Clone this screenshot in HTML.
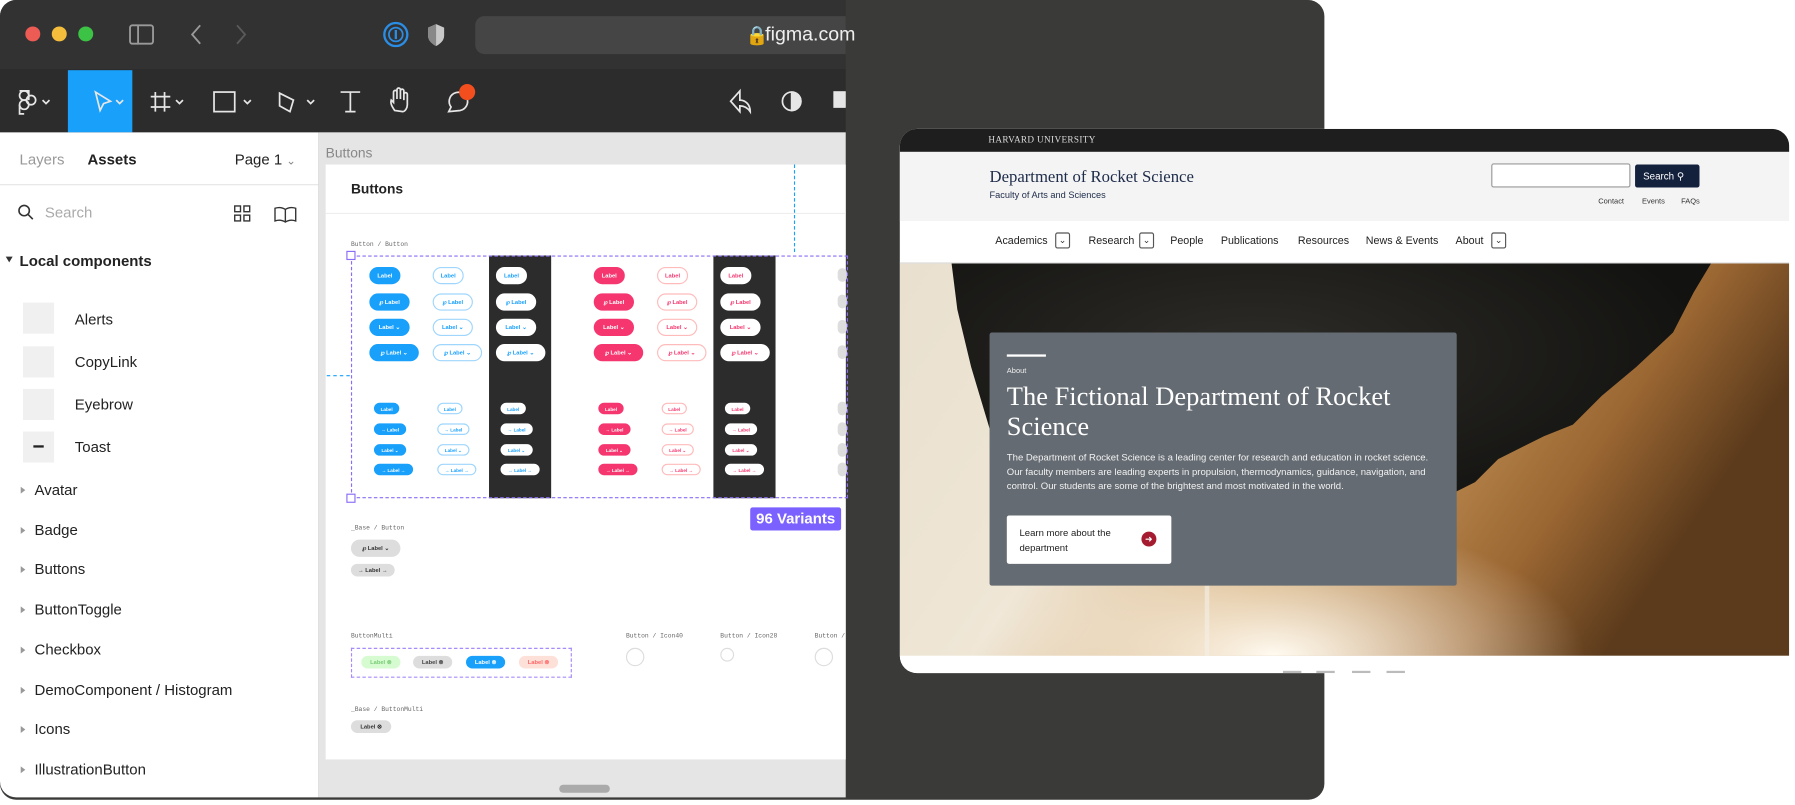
<!DOCTYPE html>
<html><head><meta charset="utf-8">
<style>
*{margin:0;padding:0;box-sizing:border-box}
body{width:1795px;height:805px;overflow:hidden;background:#fff;font-family:"Liberation Sans",sans-serif}
#s{position:absolute;left:0;top:0;width:1560px;height:700px;transform:scale(1.15064);transform-origin:0 0}
.a{position:absolute}
.lbl{position:absolute;font-family:"Liberation Mono",monospace;font-size:5.5px;color:#666}
.b{position:absolute;border-radius:9px;font-size:5px;font-weight:bold;display:flex;align-items:center;justify-content:center}
.li{position:absolute;left:30px;font-size:13px;color:#222}
.tri{position:absolute;left:18px;width:0;height:0;border-left:4px solid #999;border-top:3px solid transparent;border-bottom:3px solid transparent}
.nav span{position:absolute;top:204px;font-size:9.3px;color:#222}
.dd{position:absolute;top:202px;width:13px;height:14px;border:1px solid #555;border-radius:2px;font-size:8px;text-align:center;line-height:11px;color:#333}
</style></head><body><div id="s">
<div class="a" style="left:0;top:0;width:1151px;height:695px;background:#3a3a39;border-radius:14px"></div>
<div class="a" style="left:0;top:0;width:735px;height:60px;background:#323232;border-radius:14px 0 0 0"></div>
<div class="a" style="left:0;top:60px;width:735px;height:55px;background:#2c2c2c"></div>
<div class="a" style="left:22px;top:23px;width:13px;height:13px;border-radius:50%;background:#ed5b55"></div>
<div class="a" style="left:45px;top:23px;width:13px;height:13px;border-radius:50%;background:#f4bd3b"></div>
<div class="a" style="left:68px;top:23px;width:13px;height:13px;border-radius:50%;background:#3cc244"></div>
<svg class="a" style="left:110px;top:18px" width="120" height="24" viewBox="0 0 120 24" fill="none" stroke="#9a9a9a" stroke-width="1.6"><rect x="3" y="4" width="20" height="16" rx="2"/><line x1="10" y1="4" x2="10" y2="20"/><path d="M64 4l-7 8 7 8"/><path d="M96 4l7 8-7 8" stroke="#5a5a5a"/></svg>
<svg class="a" style="left:330px;top:17px" width="70" height="26"><circle cx="14" cy="13" r="10" fill="none" stroke="#2b8ee6" stroke-width="2"/><circle cx="14" cy="13" r="6" fill="none" stroke="#2b8ee6" stroke-width="1.5"/><rect x="13" y="9" width="2" height="8" fill="#2b8ee6"/><path d="M49 4l7 3v7c0 4-3 7-7 9-4-2-7-5-7-9V7z" fill="#c8c8c8"/><path d="M49 4v19c-4-2-7-5-7-9V7z" fill="#888"/></svg>
<div class="a" style="left:413px;top:14px;width:322px;height:33px;background:#454545;border-radius:8px 0 0 8px"></div>
<div class="a" style="left:648px;top:21px;font-size:16px;color:#eee">&#128274;</div>
<div class="a" style="left:665px;top:20px;font-size:17px;color:#eee">figma.com</div>
<div class="a" style="left:59px;top:61px;width:56px;height:54px;background:#18a0fb"></div>
<svg class="a" style="left:0;top:60px" width="735" height="56" fill="none" stroke="#e6e6e6" stroke-width="1.5">
<g><circle cx="21" cy="23" r="4"/><circle cx="21" cy="31" r="4"/><circle cx="27" cy="27" r="4"/><path d="M17 19h8v8"/><path d="M17 31v8h4"/></g>
<path d="M37 27l3 3 3-3"/>
<path d="M83 20l13 8-6 2-3 6z"/><path d="M101 27l3 3 3-3"/>
<path d="M135 20v17M143 20v17M131 24h17M131 33h17"/><path d="M153 27l3 3 3-3"/>
<rect x="186" y="20" width="18" height="17"/><path d="M212 27l3 3 3-3"/>
<path d="M243 21l12 6-3 10-9-5z"/><path d="M267 27l3 3 3-3"/>
<path d="M296 20h17M304.5 20v17M300 37h9"/>
<path d="M343 36c-2-3-4-6-3-9l2 2v-9a1.5 1.5 0 013 0v6-8a1.5 1.5 0 013 0v8-7a1.5 1.5 0 013 0v8-5a1.5 1.5 0 013 0v9c0 3-2 6-4 6z"/>
<path d="M390 37l2-4a8 8 0 118 3z"/>
<path d="M643 19l-8 9 8 9v-5c4 0 7 2 9 5 0-6-4-10-9-10z"/>
<circle cx="688" cy="28" r="8"/><path d="M688 20a8 8 0 010 16z" fill="#e6e6e6"/>
<rect x="725" y="20" width="10" height="13" fill="#e6e6e6"/>
</svg>
<div class="a" style="left:399px;top:73px;width:14px;height:14px;border-radius:50%;background:#f24e1e"></div>
<div class="a" style="left:0;top:115px;width:277px;height:578px;background:#fff;border-radius:0 0 0 14px"></div>
<div class="a" style="left:17px;top:131px;font-size:13px;color:#999">Layers</div>
<div class="a" style="left:76px;top:131px;font-size:13px;color:#222;font-weight:bold">Assets</div>
<div class="a" style="left:204px;top:131px;font-size:13px;color:#222">Page 1 <span style="color:#888;font-size:10px">&#8964;</span></div>
<div class="a" style="left:0;top:160px;width:277px;height:1px;background:#e5e5e5"></div>
<svg class="a" style="left:15px;top:177px" width="16" height="16" fill="none" stroke="#333" stroke-width="1.4"><circle cx="6" cy="6" r="4.5"/><path d="M9.5 9.5l4 4"/></svg>
<div class="a" style="left:39px;top:177px;font-size:13px;color:#aaa">Search</div>
<svg class="a" style="left:203px;top:177px" width="60" height="18" fill="none" stroke="#333" stroke-width="1.2"><rect x="1" y="2" width="5" height="5"/><rect x="9" y="2" width="5" height="5"/><rect x="1" y="10" width="5" height="5"/><rect x="9" y="10" width="5" height="5"/><path d="M36 4c3-1 6-1 9 1 3-2 6-2 9-1v11c-3-1-6-1-9 1-3-2-6-2-9-1zM45 5v11"/></svg>
<div class="a" style="left:5px;top:223px;width:0;height:0;border-top:5px solid #333;border-left:3px solid transparent;border-right:3px solid transparent"></div>
<div class="a" style="left:17px;top:219px;font-size:13px;color:#222;font-weight:bold">Local components</div>
<div class="a" style="left:20px;top:263px;width:27px;height:27px;background:#f0f0f0"></div>
<div class="a" style="left:20px;top:301px;width:27px;height:27px;background:#f0f0f0"></div>
<div class="a" style="left:20px;top:338px;width:27px;height:27px;background:#f0f0f0"></div>
<div class="a" style="left:20px;top:375px;width:27px;height:27px;background:#f0f0f0"></div>
<div class="a" style="left:29px;top:387px;width:9px;height:2px;background:#222"></div>
<div class="li" style="left:65px;top:270px">Alerts</div>
<div class="li" style="left:65px;top:307px">CopyLink</div>
<div class="li" style="left:65px;top:344px">Eyebrow</div>
<div class="li" style="left:65px;top:381px">Toast</div>
<div class="tri" style="top:423px"></div><div class="li" style="top:418px">Avatar</div>
<div class="tri" style="top:458px"></div><div class="li" style="top:453px">Badge</div>
<div class="tri" style="top:492px"></div><div class="li" style="top:487px">Buttons</div>
<div class="tri" style="top:527px"></div><div class="li" style="top:522px">ButtonToggle</div>
<div class="tri" style="top:562px"></div><div class="li" style="top:557px">Checkbox</div>
<div class="tri" style="top:597px"></div><div class="li" style="top:592px">DemoComponent / Histogram</div>
<div class="tri" style="top:631px"></div><div class="li" style="top:626px">Icons</div>
<div class="tri" style="top:666px"></div><div class="li" style="top:661px">IllustrationButton</div>
<div class="a" style="left:277px;top:115px;width:458px;height:578px;background:#e5e5e5"></div>
<div class="a" style="left:283px;top:126px;font-size:12px;color:#888">Buttons</div>
<div class="a" style="left:283px;top:143px;width:452px;height:517px;background:#fff"></div>
<div class="a" style="left:283px;top:185px;width:452px;height:1px;background:#eee"></div>
<div class="a" style="left:305px;top:157px;font-size:12px;font-weight:bold;color:#222">Buttons</div>
<div class="a" style="left:690px;top:143px;height:76px;border-left:1px dashed #18a0fb"></div>
<div class="a" style="left:284px;top:326px;width:20px;border-top:1px dashed #18a0fb"></div>
<div class="lbl" style="left:305px;top:209px">Button / Button</div>
<div class="a" style="left:425px;top:222px;width:54px;height:211px;background:#2c2c2c"></div>
<div class="a" style="left:620px;top:222px;width:54px;height:211px;background:#2c2c2c"></div>
<div class="a" style="left:305px;top:222px;width:432px;height:211px;border:1px dashed #8b6cf6"></div>
<div class="a" style="left:301px;top:218px;width:8px;height:8px;border:1px solid #8b6cf6;background:#fff"></div>
<div class="a" style="left:301px;top:429px;width:8px;height:8px;border:1px solid #8b6cf6;background:#fff"></div>
<div id="btns"></div>
<div class="a" style="left:652px;top:441px;width:79px;height:20px;background:#7b61ff;border-radius:2px;color:#fff;font-size:13px;font-weight:bold;text-align:center;line-height:20px">96 Variants</div>
<div class="lbl" style="left:305px;top:455px">_Base / Button</div>
<div class="b" style="left:305px;top:469px;width:43px;height:15px;background:#ddd;color:#333">&#8472; Label &#8964;</div>
<div class="b" style="left:305px;top:490px;width:38px;height:11px;background:#ddd;color:#333">&#8594; Label &#8594;</div>
<div class="lbl" style="left:305px;top:549px">ButtonMulti</div>
<div class="lbl" style="left:544px;top:549px">Button / Icon40</div>
<div class="lbl" style="left:626px;top:549px">Button / Icon28</div>
<div class="lbl" style="left:708px;top:549px">Button /</div>
<div class="a" style="left:305px;top:563px;width:192px;height:26px;border:1px dashed #a78bfa"></div>
<div class="b" style="left:314px;top:570px;width:34px;height:11px;background:#d7fbd0;color:#7c7">Label ⊗</div>
<div class="b" style="left:359px;top:570px;width:34px;height:11px;background:#ddd;color:#444">Label ⊗</div>
<div class="b" style="left:405px;top:570px;width:34px;height:11px;background:#18a0fb;color:#fff">Label ⊗</div>
<div class="b" style="left:451px;top:570px;width:34px;height:11px;background:#fde0d8;color:#f66">Label ⊗</div>
<div class="a" style="left:544px;top:563px;width:16px;height:16px;border:1px solid #ddd;border-radius:50%"></div>
<div class="a" style="left:626px;top:563px;width:12px;height:12px;border:1px solid #ddd;border-radius:50%"></div>
<div class="a" style="left:708px;top:563px;width:16px;height:16px;border:1px solid #ddd;border-radius:50%"></div>
<div class="lbl" style="left:305px;top:613px">_Base / ButtonMulti</div>
<div class="b" style="left:305px;top:626px;width:35px;height:11px;background:#ddd;color:#333">Label ⊗</div>
<div class="a" style="left:486px;top:682px;width:44px;height:7px;background:#aaa;border-radius:4px"></div>
<div class="a" style="left:782px;top:112px;width:773px;height:473px;background:#fff;border-radius:15px;overflow:hidden">
 <div class="a" style="left:0;top:0;width:773px;height:20px;background:#1e1e1e"></div>
 <div class="a" style="left:77px;top:5px;font-family:'Liberation Serif',serif;font-size:8px;color:#ddd;letter-spacing:.3px">HARVARD UNIVERSITY</div>
 <div class="a" style="left:0;top:20px;width:773px;height:60px;background:#f3f4f3"></div>
 <div class="a" style="left:78px;top:34px;font-family:'Liberation Serif',serif;font-size:14.5px;color:#1e2b4a">Department of Rocket Science</div>
 <div class="a" style="left:78px;top:53px;font-size:8px;color:#1e2b4a">Faculty of Arts and Sciences</div>
 <div class="a" style="left:514px;top:30px;width:121px;height:21px;background:#fff;border:1px solid #999;border-radius:2px"></div>
 <div class="a" style="left:639px;top:31px;width:56px;height:20px;background:#14213d;border-radius:2px;color:#fff;font-size:8.5px;line-height:20px;padding-left:7px">Search &#9906;</div>
 <div class="a" style="left:607px;top:60px;font-size:6.5px;color:#333">Contact</div>
 <div class="a" style="left:645px;top:60px;font-size:6.5px;color:#333">Events</div>
 <div class="a" style="left:679px;top:60px;font-size:6.5px;color:#333">FAQs</div>
 <div class="a" style="left:0;top:116px;width:773px;height:1px;background:#ddd"></div>
 <svg class="a" style="left:0;top:117px" width="773" height="341" viewBox="0 0 773 341">
  <defs>
   <linearGradient id="g1" x1="0" y1="0" x2="1" y2="0.3"><stop offset="0" stop-color="#e9e0cf"/><stop offset=".35" stop-color="#efe6d6"/><stop offset=".6" stop-color="#c99a5c"/><stop offset=".85" stop-color="#9a6632"/><stop offset="1" stop-color="#5c3b1c"/></linearGradient>
   <radialGradient id="g2" cx=".42" cy="1" r=".35"><stop offset="0" stop-color="#fffaf0"/><stop offset="1" stop-color="#fffaf0" stop-opacity="0"/></radialGradient>
   <radialGradient id="g3" cx=".4" cy=".3" r=".6"><stop offset="0" stop-color="#2e2c28"/><stop offset="1" stop-color="#121210"/></radialGradient>
  </defs>
  <rect width="773" height="341" fill="url(#g1)"/>
  <rect width="773" height="341" fill="url(#g2)"/>
  <path d="M45 0H705L690 25 672 60 640 90 610 115 585 140 560 150 520 170 500 190 480 200 470 240 430 250 300 260 95 260 88 200 80 150 62 90 50 40z" fill="url(#g3)"/>
  <rect x="265" y="280" width="4" height="61" fill="#f5f0e8" opacity=".6"/>
 </svg>
 <div class="a" style="left:0;top:458px;width:773px;height:15px;background:#fff"></div>
 <div class="a" style="left:333px;top:471px;width:16px;height:2px;background:#bbb"></div>
 <div class="a" style="left:362px;top:471px;width:16px;height:2px;background:#bbb"></div>
 <div class="a" style="left:393px;top:471px;width:16px;height:2px;background:#bbb"></div>
 <div class="a" style="left:423px;top:471px;width:16px;height:2px;background:#bbb"></div>
</div>
<div class="nav">
 <span style="left:865px">Academics</span><div class="dd" style="left:917px">&#8964;</div>
 <span style="left:946px">Research</span><div class="dd" style="left:990px">&#8964;</div>
 <span style="left:1017px">People</span>
 <span style="left:1061px">Publications</span>
 <span style="left:1128px">Resources</span>
 <span style="left:1187px">News &amp; Events</span>
 <span style="left:1265px">About</span><div class="dd" style="left:1296px">&#8964;</div>
</div>
<div class="a" style="left:860px;top:289px;width:406px;height:220px;background:#646b72;border-radius:2px"></div>
<div class="a" style="left:875px;top:308px;width:34px;height:2px;background:#fff"></div>
<div class="a" style="left:875px;top:319px;font-size:6.5px;color:#eee">About</div>
<div class="a" style="left:875px;top:332px;width:380px;font-family:'Liberation Serif',serif;font-size:23px;line-height:26px;color:#fff">The Fictional Department of Rocket Science</div>
<div class="a" style="left:875px;top:391px;width:380px;font-size:8.3px;line-height:12.6px;color:#f2f2f2">The Department of Rocket Science is a leading center for research and education in rocket science. Our faculty members are leading experts in propulsion, thermodynamics, guidance, navigation, and control. Our students are some of the brightest and most motivated in the world.</div>
<div class="a" style="left:875px;top:448px;width:143px;height:42px;background:#fff;border-radius:2px"></div>
<div class="a" style="left:886px;top:457px;width:90px;font-size:8.3px;line-height:13px;color:#222">Learn more about the department</div>
<div class="a" style="left:992px;top:462px;width:13px;height:13px;border-radius:50%;background:#a51c30;color:#fff;font-size:8px;text-align:center;line-height:13px">&#10140;</div>
</div>
<script>
(function(){
var h='';
var cols=[[321,'#18a0fb','#fff','#18a0fb'],[376,'#fff','#18a0fb','#9fd6fd'],[431,'#fff','#18a0fb','#fff'],[516,'#f5366f','#fff','#f5366f'],[571,'#fff','#f5366f','#fbb'],[626,'#fff','#f5366f','#fff']];
var top=[[239,'Label',27],[262,'&#8472; Label',35],[284,'Label &#8964;',35],[306,'&#8472; Label &#8964;',43]];
var bot=[[355,'Label',22],[373,'&#8594; Label',28],[391,'Label &#8964;',28],[408,'&#8594; Label &#8594;',34]];
cols.forEach(function(c){
 top.forEach(function(r){h+='<div class="b" style="left:'+c[0]+'px;top:'+(r[0]-7)+'px;width:'+r[2]+'px;height:15px;background:'+c[1]+';color:'+c[2]+';border:1px solid '+c[3]+'">'+r[1]+'</div>';});
 bot.forEach(function(r){h+='<div class="b" style="left:'+(c[0]+4)+'px;top:'+(r[0]-5)+'px;width:'+r[2]+'px;height:10px;font-size:4px;background:'+c[1]+';color:'+c[2]+';border:1px solid '+c[3]+'">'+r[1]+'</div>';});
});
[239,262,284,306,355,373,391,408].forEach(function(y){h+='<div class="b" style="left:728px;top:'+(y-6)+'px;width:8px;height:12px;background:#ddd"></div>';});
document.getElementById('btns').outerHTML=h;
})();
</script>
</body></html>
